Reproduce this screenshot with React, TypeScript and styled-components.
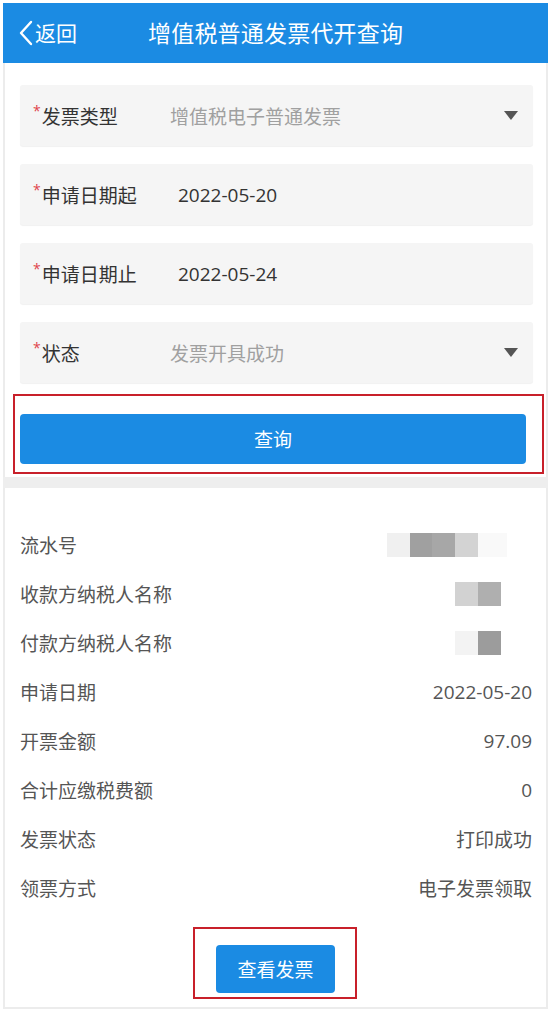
import * as React from "react";
import styled, { createGlobalStyle } from "styled-components";

const GlobalStyle = createGlobalStyle`
  html, body {
    margin: 0;
    padding: 0;
    background: #fff;
  }
  body {
    font-family: "Open Sans", "Noto Sans CJK SC", sans-serif;
  }
  * {
    box-sizing: border-box;
  }
`;

const Frame = styled.div`
  margin: 3px;
  width: 545px;
  height: 1006px;
  border-left: 2px solid #ececec;
  border-right: 2px solid #ececec;
  border-bottom: 2px solid #ececec;
  display: flex;
  flex-direction: column;
`;

const Topbar = styled.header`
  height: 60px;
  margin: 0 -2px;
  background-color: #1b8be3;
  color: #fff;
  display: flex;
  align-items: center;
  padding-left: 15px;
`;

const Back = styled.div`
  display: flex;
  align-items: center;
  font-size: 21px;
  width: 130px;
  line-height: 1;
`;

const Title = styled.h1`
  margin: 0;
  font-size: 23px;
  font-weight: normal;
  line-height: 1;
  letter-spacing: 0.2px;
`;

const Form = styled.div`
  padding: 22px 13px 0 15px;
  display: flex;
  flex-direction: column;
  gap: 18px;
`;

const Field = styled.div`
  height: 61px;
  background: #f5f5f5;
  border-radius: 3px;
  box-shadow: 0 1px 1px rgba(0, 0, 0, 0.06);
  display: flex;
  align-items: center;
  padding: 0 15px 0 13px;
  font-size: 19px;
`;

const Label = styled.div`
  width: 137px;
  flex-shrink: 0;
  color: #333;
  display: flex;
  align-items: center;
`;

const Star = styled.span`
  color: #e0434b;
  font-size: 14px;
  align-self: flex-start;
  margin-top: -1px;
  margin-right: 1px;
`;

const Value = styled.div<{ $muted?: boolean; $inset?: number }>`
  flex: 1;
  color: ${(p) => (p.$muted ? "#a0a0a0" : "#333")};
  padding-left: ${(p) => p.$inset ?? 0}px;
`;

const Caret = styled.div`
  width: 0;
  height: 0;
  border-left: 7px solid transparent;
  border-right: 7px solid transparent;
  border-top: 9px solid #555;
`;

const Highlight = styled.div<{ $pad: string }>`
  border: 2px solid #c8202a;
  padding: ${(p) => p.$pad};
`;

const QueryWrap = styled(Highlight)`
  margin: 11px 2px 0 8px;
`;

const PrimaryButton = styled.button<{ $w?: number; $h: number }>`
  display: block;
  width: ${(p) => (p.$w ? `${p.$w}px` : "100%")};
  height: ${(p) => p.$h}px;
  border: none;
  border-radius: 4px;
  background-color: #1b8be3;
  color: #fff;
  font-family: inherit;
  font-size: 19px;
  cursor: pointer;
`;

const Divider = styled.div`
  height: 11px;
  margin: 3px -2px 0;
  background: #eeeeee;
`;

const Details = styled.div`
  padding: 32px 14px 0 15px;
  display: flex;
  flex-direction: column;
`;

const Row = styled.div`
  height: 49px;
  display: flex;
  align-items: center;
  justify-content: space-between;
  font-size: 19px;
  color: #555;
`;

const Mosaic = styled.div<{ $gap: number }>`
  display: flex;
  height: 24px;
  margin-right: ${(p) => p.$gap}px;
`;

const Cell = styled.div<{ $w: number; $c: string }>`
  width: ${(p) => p.$w}px;
  background: ${(p) => p.$c};
`;

const Footer = styled.div`
  display: flex;
  justify-content: center;
  padding-top: 15px;
`;

const ViewWrap = styled(Highlight)`
  margin-left: -1px;
`;

type Block = [number, string];

const details: { label: string; value?: string; mosaic?: Block[]; gap?: number }[] = [
  {
    label: "流水号",
    mosaic: [
      [23, "#f0f0f0"],
      [22, "#a0a0a0"],
      [23, "#a7a7a7"],
      [23, "#d3d3d3"],
      [29, "#f9f9f9"],
    ],
    gap: 25,
  },
  { label: "收款方纳税人名称", mosaic: [[23, "#d2d2d2"], [23, "#afafaf"]], gap: 31 },
  { label: "付款方纳税人名称", mosaic: [[23, "#f3f3f3"], [23, "#9c9c9c"]], gap: 31 },
  { label: "申请日期", value: "2022-05-20" },
  { label: "开票金额", value: "97.09" },
  { label: "合计应缴税费额", value: "0" },
  { label: "发票状态", value: "打印成功" },
  { label: "领票方式", value: "电子发票领取" },
];

const App = () => {
  return (
    <>
      <GlobalStyle />
      <Frame>
        <Topbar>
          <Back>
            <svg width="17" height="26" viewBox="0 0 17 26" fill="none">
              <path d="M13 2 L3 13 L13 24" stroke="#fff" strokeWidth="2.4" strokeLinecap="round" strokeLinejoin="round" />
            </svg>
            <span>返回</span>
          </Back>
          <Title>增值税普通发票代开查询</Title>
        </Topbar>

        <Form>
          <Field>
            <Label><Star>*</Star>发票类型</Label>
            <Value $muted>增值税电子普通发票</Value>
            <Caret />
          </Field>
          <Field>
            <Label><Star>*</Star>申请日期起</Label>
            <Value $inset={8}>2022-05-20</Value>
          </Field>
          <Field>
            <Label><Star>*</Star>申请日期止</Label>
            <Value $inset={8}>2022-05-24</Value>
          </Field>
          <Field>
            <Label><Star>*</Star>状态</Label>
            <Value $muted>发票开具成功</Value>
            <Caret />
          </Field>
        </Form>

        <QueryWrap $pad="18px 16px 8px 5px">
          <PrimaryButton $h={50}>查询</PrimaryButton>
        </QueryWrap>

        <Divider />

        <Details>
          {details.map((d) => (
            <Row key={d.label}>
              <span>{d.label}</span>
              {d.mosaic ? (
                <Mosaic $gap={d.gap ?? 0}>
                  {d.mosaic.map(([w, c], i) => (
                    <Cell key={i} $w={w} $c={c} />
                  ))}
                </Mosaic>
              ) : (
                <span>{d.value}</span>
              )}
            </Row>
          ))}
        </Details>

        <Footer>
          <ViewWrap $pad="16px 20px 4px 21px">
            <PrimaryButton $w={119} $h={48}>查看发票</PrimaryButton>
          </ViewWrap>
        </Footer>
      </Frame>
    </>
  );
};

export default App;
